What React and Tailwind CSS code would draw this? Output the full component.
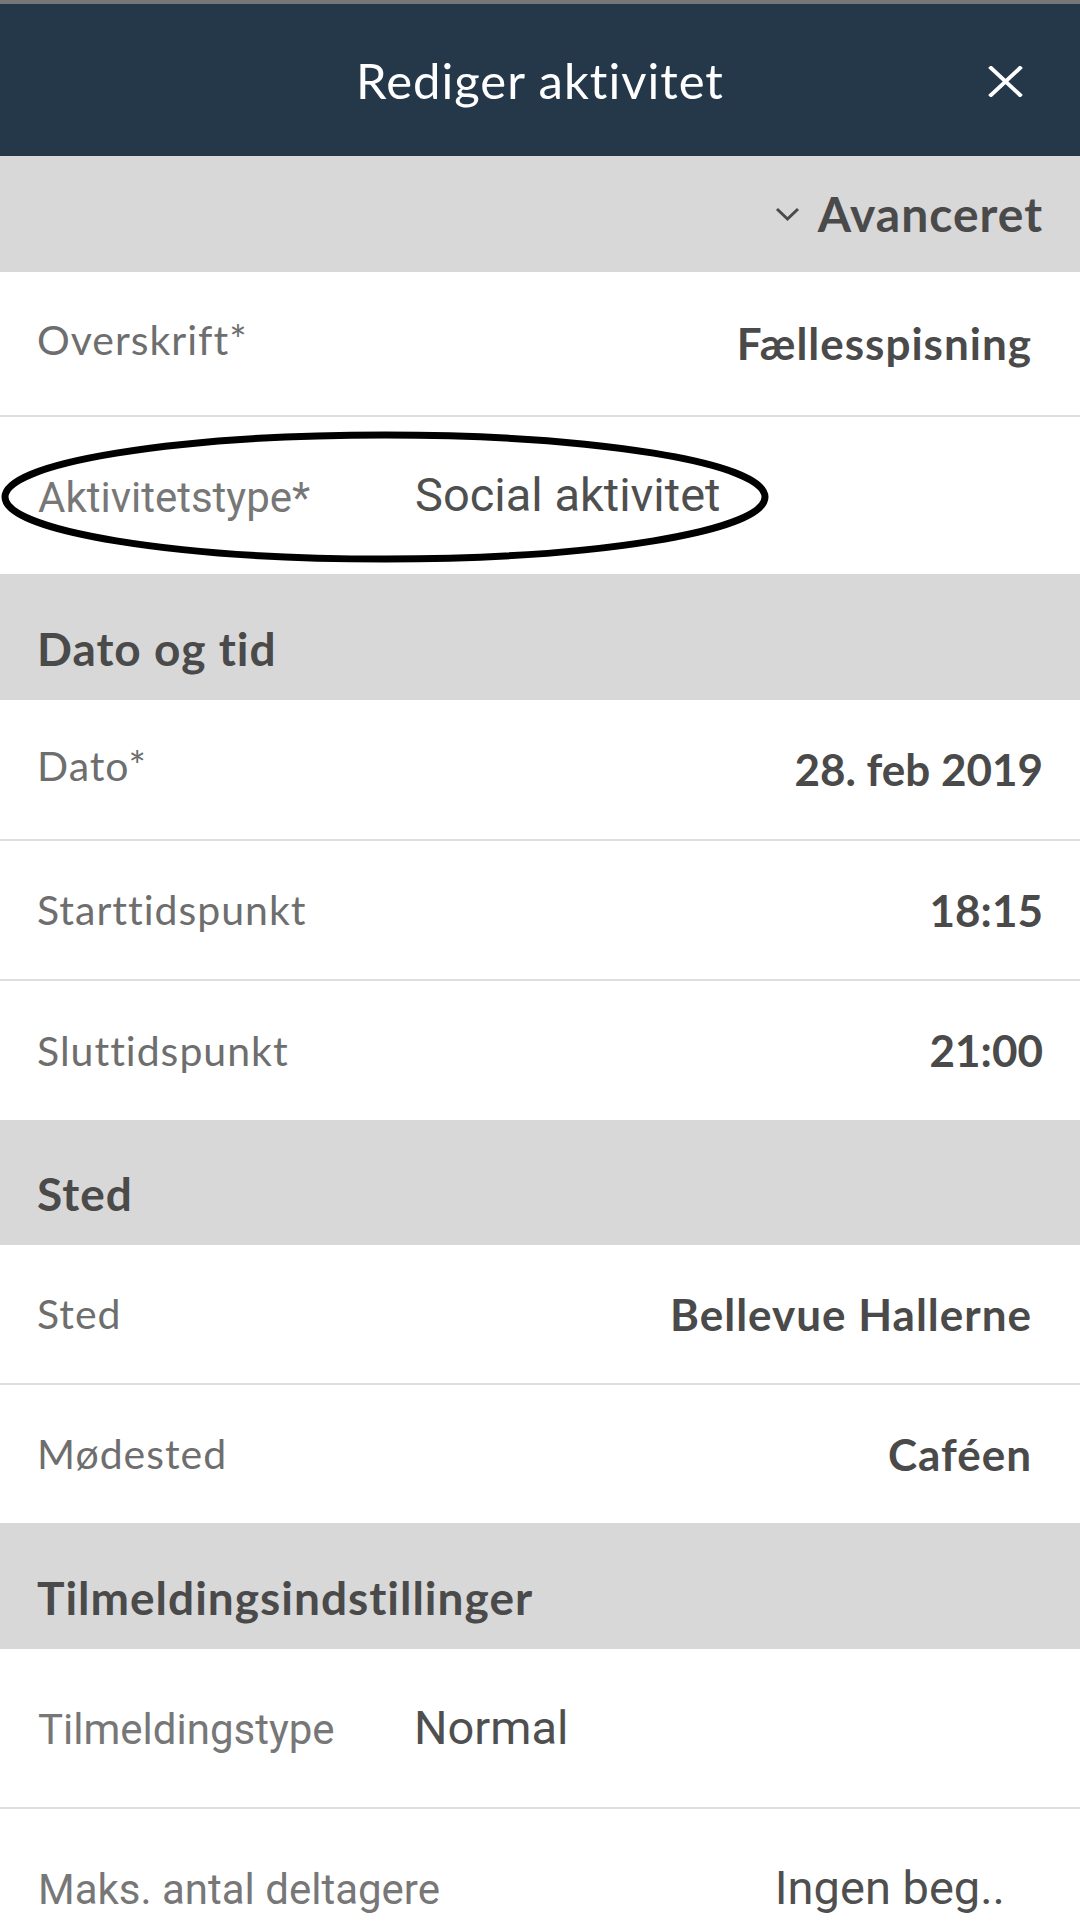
import React from "react";

const lato = "font-['Lato','Liberation_Sans',sans-serif] [font-variant-ligatures:none]";
const roboto = "font-['Roboto','Liberation_Sans',sans-serif]";

function Section({ title, h }) {
  return (
    <div className={`flex ${h} items-end bg-[#d8d8d8] pb-[24px] pl-[37px]`}>
      <span className={`${lato} text-[46px] font-bold leading-[1.2] tracking-[1px] text-[#4a4a4a]`}>{title}</span>
    </div>
  );
}

function Row({ label, value, h, border, pr, shift, digits }) {
  return (
    <div
      className={`flex ${h} items-center justify-between bg-white pl-[37px] ${pr} ${
        border ? "border-b-2 border-[#dedede]" : ""
      }`}
    >
      <span className={`${lato} text-[41px] leading-[1.2] tracking-[1px] text-[#6e6e6e] ${shift ? "mb-2" : ""}`}>
        {label}
      </span>
      <span
        className={`${lato} text-[44px] font-bold leading-[1.2] text-[#4a4a4a] ${
          digits ? "" : "tracking-[1px]"
        }`}
      >
        {value}
      </span>
    </div>
  );
}

export default function App() {
  return (
    <div className="h-[1932px] w-[1080px] overflow-hidden bg-white">
      <div className="h-[4px] bg-[#777777]" />
      <header className="relative flex h-[152px] items-center justify-center bg-[#24384a]">
        <span className={`${lato} text-[49px] leading-[1.2] tracking-[1px] text-white`}>Rediger aktivitet</span>
        <svg
          className="absolute right-[57px] top-[62px]"
          width="35"
          height="31"
          viewBox="0 0 35 31"
          fill="none"
          stroke="white"
          strokeWidth="4"
          strokeLinecap="square"
        >
          <path d="M3 2 L32 29 M32 2 L3 29" />
        </svg>
      </header>
      <div className="flex h-[116px] items-center justify-end gap-[18px] bg-[#d8d8d8] pr-[37px]">
        <svg width="25" height="16" viewBox="0 0 25 16" fill="none" stroke="#4a4a4a" strokeWidth="3">
          <path d="M2 3 L12.5 13 L23 3" />
        </svg>
        <span className={`${lato} text-[48px] font-bold leading-[1.2] tracking-[1px] text-[#4a4a4a]`}>Avanceret</span>
      </div>

      <Row label="Overskrift*" value="Fællesspisning" h="h-[145px]" border pr="pr-[48px]" shift />

      <div className="relative flex h-[157px] items-center bg-white pl-[38px]">
        <span className={`${roboto} mt-[5px] w-[377px] shrink-0 text-[42px] leading-[1.2] text-[#777777]`}>
          Aktivitetstype*
        </span>
        <span className={`${roboto} text-[47px] leading-[1.2] text-[#4f4f4f]`}>Social aktivitet</span>
        <svg className="absolute left-0 top-[12px]" width="772" height="138" viewBox="0 0 772 138" fill="none">
          <ellipse cx="385" cy="68" rx="380" ry="62" stroke="black" strokeWidth="7" />
        </svg>
      </div>

      <Section title="Dato og tid" h="h-[126px]" />
      <Row label="Dato*" value="28. feb 2019" h="h-[141px]" border pr="pr-[37px]" shift digits />
      <Row label="Starttidspunkt" value="18:15" h="h-[140px]" border pr="pr-[37px]" digits />
      <Row label="Sluttidspunkt" value="21:00" h="h-[139px]" pr="pr-[37px]" digits />

      <Section title="Sted" h="h-[125px]" />
      <Row label="Sted" value="Bellevue Hallerne" h="h-[140px]" border pr="pr-[48px]" />
      <Row label="Mødested" value="Caféen" h="h-[138px]" pr="pr-[48px]" />

      <Section title="Tilmeldingsindstillinger" h="h-[126px]" />
      <div className="flex h-[160px] items-center border-b-2 border-[#dedede] bg-white pl-[38px]">
        <span className={`${roboto} mt-[5px] w-[376px] shrink-0 text-[42px] leading-[1.2] text-[#777777]`}>
          Tilmeldingstype
        </span>
        <span className={`${roboto} text-[47px] leading-[1.2] text-[#4f4f4f]`}>Normal</span>
      </div>
      <div className="flex h-[158px] items-center justify-between bg-white pl-[38px] pr-[75px]">
        <span className={`${roboto} mt-[5px] text-[42px] leading-[1.2] text-[#777777]`}>Maks. antal deltagere</span>
        <span className={`${roboto} text-[47px] leading-[1.2] text-[#4f4f4f]`}>Ingen beg..</span>
      </div>
    </div>
  );
}
